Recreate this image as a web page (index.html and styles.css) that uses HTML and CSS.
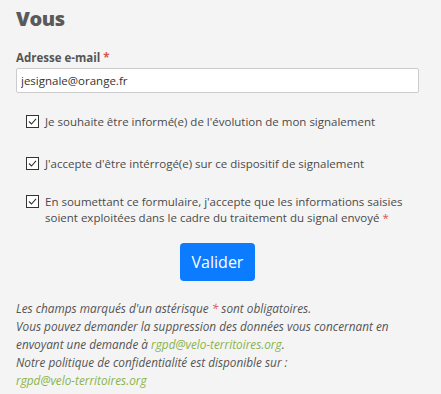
FILE: index.html
```html
<!DOCTYPE html>
<html>
<head>
  <link rel="stylesheet" href="styles.css">
</head>
<body>
  <div class="form">
    <h2>Vous</h2>

    <label class="field-label" for="email">Adresse e-mail <span class="req">*</span></label>
    <input type="text" id="email" class="field" value="jesignale@orange.fr">

    <div class="checks">
      <label class="check">
        <span class="box"><svg width="13" height="13" viewBox="0 0 13 13"><rect x="0.5" y="0.5" width="12" height="12" fill="#fff" stroke="#333"/><path d="M3 6.5 L5.5 9 L10 3.8" fill="none" stroke="#333" stroke-width="1.1"/></svg></span>
        <span>Je souhaite être informé(e) de l'évolution de mon signalement</span>
      </label>
      <label class="check">
        <span class="box"><svg width="13" height="13" viewBox="0 0 13 13"><rect x="0.5" y="0.5" width="12" height="12" fill="#fff" stroke="#333"/><path d="M3 6.5 L5.5 9 L10 3.8" fill="none" stroke="#333" stroke-width="1.1"/></svg></span>
        <span>J'accepte d'être intérrogé(e) sur ce dispositif de signalement</span>
      </label>
      <label class="check">
        <span class="box"><svg width="13" height="13" viewBox="0 0 13 13"><rect x="0.5" y="0.5" width="12" height="12" fill="#fff" stroke="#333"/><path d="M3 6.5 L5.5 9 L10 3.8" fill="none" stroke="#333" stroke-width="1.1"/></svg></span>
        <span>En soumettant ce formulaire, j'accepte que les informations saisies soient exploitées dans le cadre du traitement du signal envoyé <span class="req">*</span></span>
      </label>
    </div>

    <div class="actions">
      <button class="submit-btn">Valider</button>
    </div>

    <p class="notes">
      Les champs marqués d'un astérisque <span class="req">*</span> sont obligatoires.<br>
      Vous pouvez demander la suppression des données vous concernant en envoyant une demande à <a href="#">rgpd@velo-territoires.org</a>.<br>
      Notre politique de confidentialité est disponible sur :<br>
      <a href="#">rgpd@velo-territoires.org</a>
    </p>
  </div>
</body>
</html>
```

FILE: styles.css
```css
body {
  margin: 0;
  background-color: #f4f4f4;
  font-family: 'Open Sans', 'Noto Sans', sans-serif;
  color: #555;
}
.form {
  padding: 0 22px 0 16px;
}
h2 {
  margin: 0;
  padding-top: 6px;
  font-size: 20px;
  line-height: 26px;
  font-weight: 800;
  color: #5a5a5a;
  letter-spacing: -0.4px;
}
.field-label {
  display: block;
  margin-top: 18px;
  font-size: 11.5px;
  font-weight: bold;
}
.req {
  color: #d9534f;
}
.field {
  display: block;
  width: 100%;
  box-sizing: border-box;
  height: 25px;
  margin-top: 3px;
  padding: 0 4px;
  border: 1px solid #ccc;
  border-radius: 2px;
  background: #fff;
  font-family: inherit;
  font-size: 11.5px;
  color: #333;
}
.checks {
  padding-left: 10px;
  margin-top: 21px;
}
.check {
  display: flex;
  gap: 6px;
  font-size: 11.5px;
  line-height: 16px;
  color: #4a4a4a;
  margin-bottom: 24px;
}
.check:nth-child(2) {
  margin-bottom: 20px;
}
.box {
  flex: none;
  padding-top: 1px;
}
.actions {
  text-align: center;
  margin-top: -7px;
}
.submit-btn {
  background-color: #0b7bff;
  color: #fff;
  border: none;
  border-radius: 4px;
  padding: 0;
  width: 75px;
  height: 38px;
  font-family: inherit;
  font-size: 16px;
}
.notes {
  margin: 18px 0 0;
  font-size: 11.8px;
  font-style: italic;
  line-height: 18px;
}
.notes a {
  color: #8ab34a;
  text-decoration: none;
}
```
